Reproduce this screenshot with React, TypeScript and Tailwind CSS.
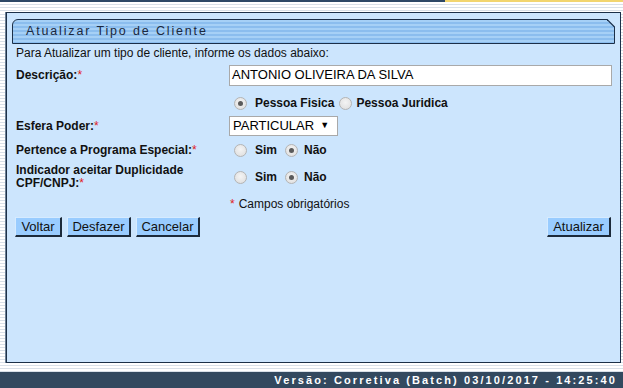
import React from "react";

const Radio = ({ checked }: { checked?: boolean }) => (
  <span className="inline-flex items-center justify-center w-[13px] h-[13px] rounded-full border border-[#b4b4b4] bg-[radial-gradient(circle_at_50%_40%,#f4f4f4,#dcdcdc)] shrink-0">
    {checked && <span className="w-[5px] h-[5px] rounded-full bg-[#5a5a5a]" />}
  </span>
);

const Req = () => <span className="text-[#e0201c] font-normal">*</span>;

const Btn = ({ children, w }: { children: React.ReactNode; w: string }) => (
  <button
    className={`${w} h-[20px] px-0 bg-[#99ccff] border-t border-l border-t-[#d6ebff] border-l-[#d6ebff] border-r-2 border-b-2 border-r-[#1c2a3a] border-b-[#1c2a3a] text-[13px] leading-[15px] text-[#111] text-center`}
  >
    {children}
  </button>
);

const stripesH =
  "bg-[repeating-linear-gradient(to_bottom,#ffffff_0px,#ffffff_2px,#d9e0e8_2px,#d9e0e8_3px)]";

const YesNo = () => (
  <div className="flex items-center pl-[5px] font-bold">
    <Radio />
    <span className="ml-[8px] mr-[8px]">Sim</span>
    <Radio checked />
    <span className="ml-[6px]">Não</span>
  </div>
);

export default function App() {
  return (
    <div className="w-[623px] h-[388px] flex flex-col bg-[#eef3f8] font-['Liberation_Sans',Arial,sans-serif] text-[12px] text-[#111] overflow-hidden">
      <div className="flex h-[2px]">
        <div className="w-[445px] bg-[#2d4866]" />
        <div className="flex-1 bg-[#f2d56f]" />
      </div>
      <div className={`h-[10px] ${stripesH}`} />
      <div className="flex h-[351px]">
        <div className={`w-[6px] border-r border-[#6b7f95] ${stripesH}`} />
        <div className="flex-1 border border-[#1c3048] bg-[#cce5fd] pt-[6px] px-[5px] flex flex-col">
          <div className="relative h-[25px] border border-[#1c2f48] rounded-tl-[6px] bg-[repeating-linear-gradient(to_bottom,#a6d0f6_0px,#a6d0f6_2px,#8bbdee_2px,#8bbdee_4px)] flex items-center pl-[13px]">
            <span className="tracking-[1.85px] text-[12.5px] text-[#1a2840]">Atualizar Tipo de Cliente</span>
            <svg className="absolute -top-px -right-px" width="8" height="8" viewBox="0 0 8 8">
              <polygon points="0,0 8,0 8,8" fill="#cce5fd" />
              <line x1="0" y1="0.5" x2="7.5" y2="8" stroke="#1c2f48" strokeWidth="1.2" />
            </svg>
          </div>
          <div className="pl-[4px] pr-[3px]">
            <div className="h-[14px] mt-[2px] leading-[14px] text-[#111]">
              Para Atualizar um tipo de cliente, informe os dados abaixo:
            </div>
            <div className="grid grid-cols-[213px_1fr] grid-rows-[30px_26px_20px_28px_26px_28px] items-center">
              <div className="font-bold">Descrição:<Req /></div>
              <div>
                <div className="h-[21px] bg-white border border-[#a9a9a9] flex items-center pl-[2px] text-[13px] text-black">
                  ANTONIO OLIVEIRA DA SILVA
                </div>
              </div>

              <div />
              <div className="flex items-center gap-[1px] pl-[5px] font-bold">
                <Radio checked />
                <span className="ml-[7px] mr-[4px]">Pessoa Fisica</span>
                <Radio />
                <span className="ml-[3px]">Pessoa Juridica</span>
              </div>

              <div className="font-bold">Esfera Poder:<Req /></div>
              <div>
                <div className="h-[20px] w-[109px] bg-white border border-[#a9a9a9] flex items-center pl-[3px] text-[13px] text-black">
                  PARTICULAR
                  <span className="ml-[6px] text-[9px]">▼</span>
                </div>
              </div>

              <div className="font-bold">Pertence a Programa Especial:<Req /></div>
              <YesNo />

              <div className="font-bold leading-[13px] -mt-[1px]">
                Indicador aceitar Duplicidade
                <br />
                CPF/CNPJ:<Req />
              </div>
              <YesNo />

              <div />
              <div className="flex items-center pl-[1px]">
                <Req />
                <span className="ml-[4px]">Campos obrigatórios</span>
              </div>
            </div>
            <div className="flex items-center pr-[1px] -mt-[1px]">
              <div className="flex gap-[5px] ml-[-1px]">
                <Btn w="w-[47px]">Voltar</Btn>
                <Btn w="w-[64px]">Desfazer</Btn>
                <Btn w="w-[64px]">Cancelar</Btn>
              </div>
              <div className="ml-auto">
                <Btn w="w-[64px]">Atualizar</Btn>
              </div>
            </div>
          </div>
        </div>
        <div className={`w-[2px] ${stripesH}`} />
      </div>
      <div className={`h-[9px] ${stripesH}`} />
      <div className="h-[16px] bg-[#33495f] flex items-center justify-end pr-[6px] text-white font-bold text-[11px] tracking-[2.1px]">
        Versão: Corretiva (Batch) 03/10/2017 - 14:25:40
      </div>
    </div>
  );
}
